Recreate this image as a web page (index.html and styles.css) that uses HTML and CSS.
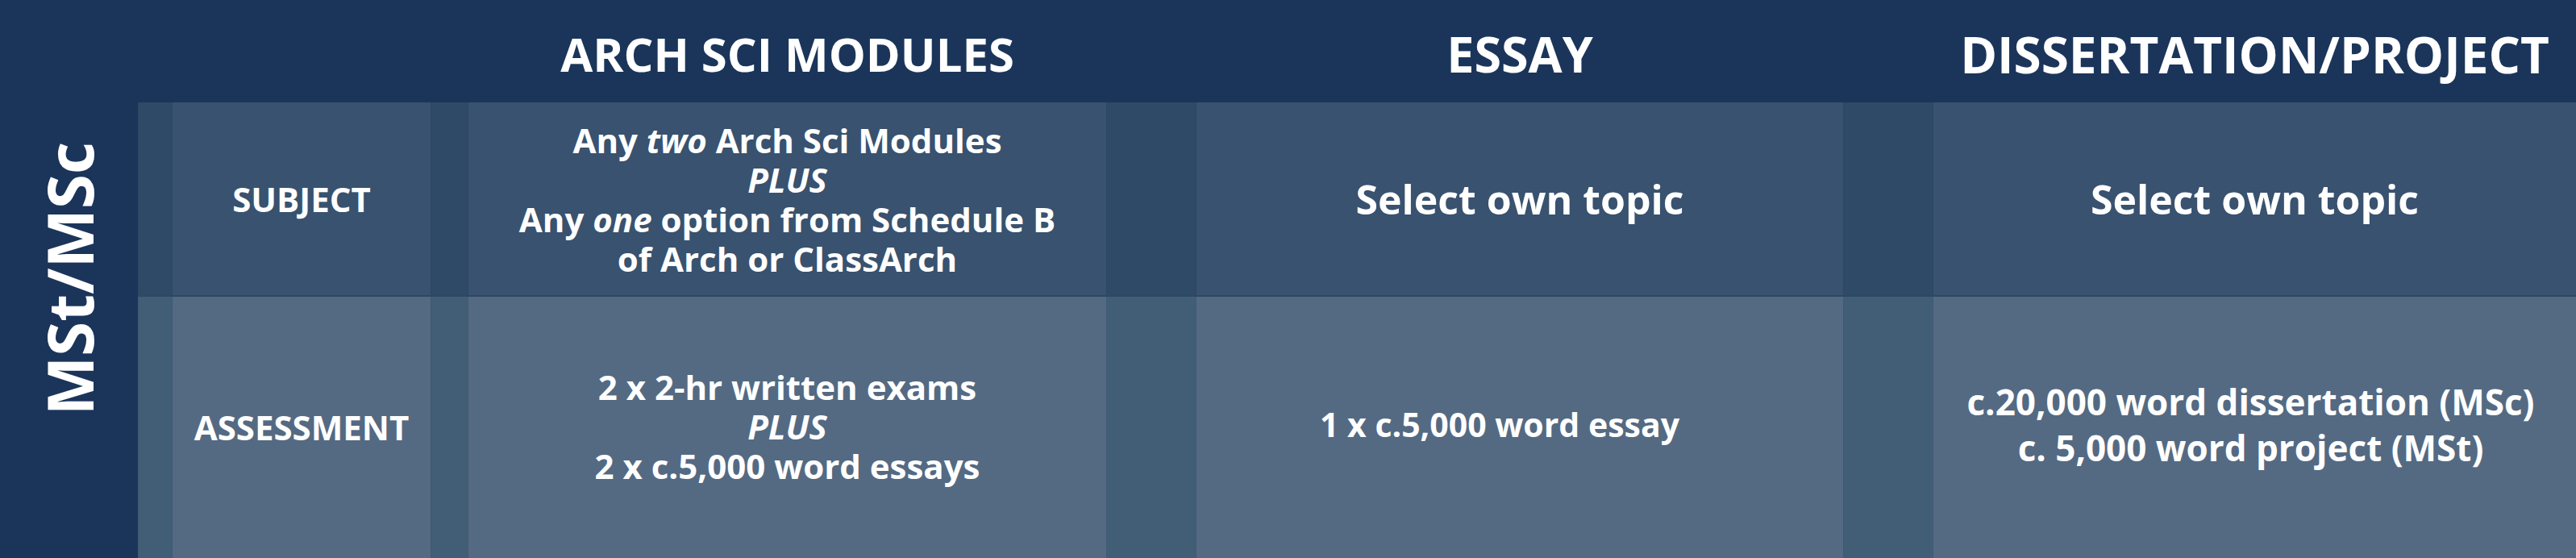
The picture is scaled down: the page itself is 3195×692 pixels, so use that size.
FILE: index.html
```html
<!DOCTYPE html>
<html lang="en">
<head>
<meta charset="utf-8">
<title>MSt/MSc course structure</title>
<link rel="stylesheet" href="styles.css">
</head>
<body>
<div class="grid">
  <div class="side"><span class="side-text">MSt/MSc</span></div>

  <div class="head head-arch c5">ARCH SCI MODULES</div>
  <div class="head head-essay c7">ESSAY</div>
  <div class="head head-diss c9">DISSERTATION/PROJECT</div>

  <div class="cell r2 gut c2"></div>
  <div class="cell r2 c3"><p class="label">SUBJECT</p></div>
  <div class="cell r2 gut c4"></div>
  <div class="cell r2 c5"><p class="text">Any <em>two</em> Arch Sci Modules<br><em>PLUS</em><br>Any <em>one</em> option from Schedule B<br>of Arch or ClassArch</p></div>
  <div class="cell r2 gut c6"></div>
  <div class="cell r2 c7"><p class="big">Select own topic</p></div>
  <div class="cell r2 gut c8"></div>
  <div class="cell r2 c9"><p class="big">Select own topic</p></div>

  <div class="cell r3 gut c2"></div>
  <div class="cell r3 c3"><p class="label">ASSESSMENT</p></div>
  <div class="cell r3 gut c4"></div>
  <div class="cell r3 c5"><p class="text">2 x 2-hr written exams<br><em>PLUS</em><br>2 x c.5,000 word essays</p></div>
  <div class="cell r3 gut c6"></div>
  <div class="cell r3 c7 shift"><p class="text single">1 x c.5,000 word essay</p></div>
  <div class="cell r3 gut c8"></div>
  <div class="cell r3 c9 shift-sm"><p class="text wide">c.20,000 word dissertation (MSc)<br>c. 5,000 word project (MSt)</p></div>
</div>
</body>
</html>
```
FILE: styles.css
```css
html, body {
  margin: 0;
  padding: 0;
  background: #1b355a;
}

.grid {
  display: grid;
  width: 3195px;
  height: 692px;
  grid-template-columns: 171px 43px 320px 47px 791px 112px 802px 112px 797px;
  grid-template-rows: 127px 241px 324px;
  background: #1b355a;
  font-family: "Open Sans", "Liberation Sans", sans-serif;
  font-weight: 700;
  color: #ffffff;
}

.side {
  grid-column: 1;
  grid-row: 1 / 4;
  display: flex;
  align-items: center;
  justify-content: center;
}

.side-text {
  writing-mode: vertical-rl;
  transform: rotate(180deg);
  font-size: 78px;
  line-height: 1;
  white-space: nowrap;
}

.head {
  grid-row: 1;
  display: flex;
  align-items: center;
  justify-content: center;
  padding-top: 6px;
  font-size: 60px;
  line-height: 1;
  white-space: nowrap;
}

.head-arch { font-size: 58px; }
.head-essay { font-size: 61px; }
.head-diss { font-size: 62px; }

.cell {
  display: flex;
  align-items: center;
  justify-content: center;
  text-align: center;
}

.cell p {
  margin: 0;
}

.shift { padding-right: 50px; padding-bottom: 4px; }
.shift-sm { padding-right: 10px; padding-bottom: 2px; }

.r2 { grid-row: 2; background: #38526f; border-bottom: 2px solid #2f4764; }
.r3 { grid-row: 3; background: #546a83; }
.r2.gut { background: #2e4a67; }
.r3.gut { background: #425e77; }
.gut { box-shadow: inset 1px 0 0 rgba(0,0,0,0.04), inset -1px 0 0 rgba(0,0,0,0.04); }

.c2 { grid-column: 2; }
.c3 { grid-column: 3; }
.c4 { grid-column: 4; }
.c5 { grid-column: 5; }
.c6 { grid-column: 6; }
.c7 { grid-column: 7; }
.c8 { grid-column: 8; }
.c9 { grid-column: 9; }

.label {
  font-size: 42px;
  line-height: 1;
}

.text {
  font-size: 42px;
  line-height: 49px;
}

.r3 .text {
  margin-bottom: 4px;
}

.text.single {
  font-size: 41px;
}

.text.wide {
  font-size: 44px;
  line-height: 57px;
}

.big {
  font-size: 50px;
  line-height: 1;
}

em {
  font-style: italic;
}
```
